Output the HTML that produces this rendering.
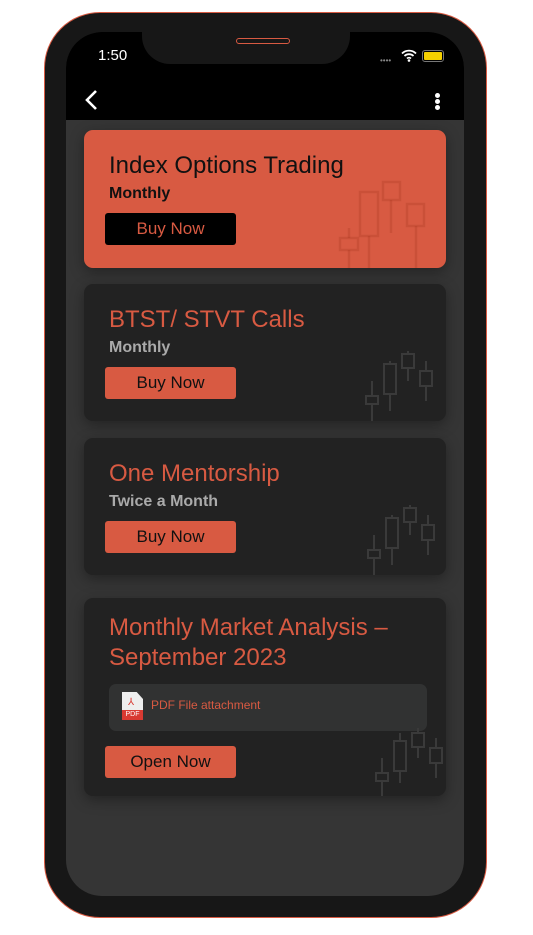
<!DOCTYPE html>
<html><head><style>
*{margin:0;padding:0;box-sizing:border-box}
body{width:533px;height:935px;background:#fff;position:relative;overflow:hidden;font-family:"Liberation Sans",sans-serif}
.phone{position:absolute;left:44px;top:12px;width:443px;height:906px;border-radius:56px;background:#171717;border:1.5px solid #d85a42}
.screen{position:absolute;left:66px;top:32px;width:398px;height:864px;border-radius:36px;background:#353535;overflow:hidden}
.top{position:absolute;left:0;top:0;width:398px;height:88px;background:#000}
.pill{position:absolute;left:236px;top:38px;width:54px;height:6px;border:1.5px solid #d85a42;border-radius:4px}
.card{position:absolute;left:84px;width:362px;background:#222;border-radius:9px;box-shadow:0 4px 14px rgba(0,0,0,.35);overflow:hidden}
.t{position:absolute;left:25px;font-size:24px;color:#d85a42;white-space:nowrap}
.s{position:absolute;left:25px;font-size:16px;font-weight:bold;color:#aaa}
.b{position:absolute;left:21px;width:131px;height:32px;border-radius:3px;background:#d85a42;color:#111;font-size:17px;text-align:center;line-height:32px}
svg.c{position:absolute}
</style></head><body>
<div class="phone"></div>
<div class="screen">
<div class="top"></div>
</div>
<div style="left:142px;top:32px;width:208px;height:32px;position:absolute;background:#171717;border-radius:0 0 28px 28px"></div>
<div class="pill"></div>
<div style="position:absolute;left:98px;top:47px;color:#fff;font-size:15px">1:50</div>
<div style="position:absolute;left:380px;top:56px;color:#888;font-size:8px">••••</div>
<svg style="position:absolute;left:401px;top:49px" width="16" height="13" viewBox="0 0 16 13"><path d="M1 4.5a10 10 0 0 1 14 0M3.5 7a6.5 6.5 0 0 1 9 0M6 9.5a3 3 0 0 1 4 0" stroke="#fff" stroke-width="1.8" fill="none"/><circle cx="8" cy="11.5" r="1.3" fill="#fff"/></svg>
<div style="position:absolute;left:422px;top:50px;width:22px;height:12px;border:1.5px solid #777;border-radius:3px;padding:1px"><div style="width:100%;height:100%;background:#f5d000;border-radius:1px"></div></div>
<svg style="position:absolute;left:84px;top:89px" width="16" height="22"><path d="M12 2L3 11l9 9" stroke="#fff" stroke-width="2.6" fill="none"/></svg>
<div style="position:absolute;left:435px;top:93px;width:5px;height:5px;border-radius:50%;background:#fff;box-shadow:0 6px 0 #fff,0 12px 0 #fff"></div>

<div class="card" style="top:130px;height:138px;background:#d85a42">
<div class="t" style="top:22px;color:#111">Index Options Trading</div>
<div class="s" style="top:55px;color:#111">Monthly</div>
<div class="b" style="top:83px;background:#000;color:#d85a42">Buy Now</div>
<svg class="c" style="left:254px;top:38px" width="100" height="100" viewBox="0 0 100 100" fill="none" stroke="rgba(150,40,20,.2)" stroke-width="2.5"><path d="M11 60v50M31 32v70M53 25v40M78 50v50"/><rect x="2" y="70" width="18" height="12" fill="#d85a42"/><rect x="22" y="24" width="18" height="44" fill="#d85a42"/><rect x="45" y="14" width="17" height="18" fill="#d85a42"/><rect x="69" y="36" width="17" height="22" fill="#d85a42"/></svg>
</div>

<div class="card" style="top:284px;height:137px">
<div class="t" style="top:22px">BTST/ STVT Calls</div>
<div class="s" style="top:55px">Monthly</div>
<div class="b" style="top:83px">Buy Now</div>
<svg class="c" style="left:280px;top:62px" width="80" height="75" viewBox="0 0 80 75" fill="none" stroke="#3a3a3a" stroke-width="2"><path d="M8 35v40M26 15v50M44 5v30M62 15v40"/><rect x="2" y="50" width="12" height="8" fill="#222"/><rect x="20" y="18" width="12" height="30" fill="#222"/><rect x="38" y="8" width="12" height="14" fill="#222"/><rect x="56" y="25" width="12" height="15" fill="#222"/></svg>
</div>

<div class="card" style="top:438px;height:137px">
<div class="t" style="top:22px">One Mentorship</div>
<div class="s" style="top:55px">Twice a Month</div>
<div class="b" style="top:83px">Buy Now</div>
<svg class="c" style="left:282px;top:62px" width="80" height="75" viewBox="0 0 80 75" fill="none" stroke="#3a3a3a" stroke-width="2"><path d="M8 35v40M26 15v50M44 5v30M62 15v40"/><rect x="2" y="50" width="12" height="8" fill="#222"/><rect x="20" y="18" width="12" height="30" fill="#222"/><rect x="38" y="8" width="12" height="14" fill="#222"/><rect x="56" y="25" width="12" height="15" fill="#222"/></svg>
</div>

<div class="card" style="top:598px;height:198px">
<div class="t" style="top:15px;line-height:30px">Monthly Market Analysis –<br>September 2023</div>
<div style="position:absolute;left:25px;top:86px;width:318px;height:47px;background:#313232;border-radius:7px"></div>
<div style="position:absolute;left:38px;top:94px;width:21px;height:28px;background:#eee;clip-path:polygon(0 0,70% 0,100% 25%,100% 100%,0 100%)"><div style="position:absolute;left:0;bottom:0;width:21px;height:10px;background:#d83a32;color:#fff;font-size:7px;text-align:center;line-height:10px">PDF</div><div style="position:absolute;left:6px;top:5px;color:#d83a32;font-size:10px">⅄</div></div>
<div style="position:absolute;left:67px;top:100px;font-size:12px;color:#d85a42">PDF File attachment</div>
<div class="b" style="top:148px">Open Now</div>
<svg class="c" style="left:290px;top:125px" width="80" height="75" viewBox="0 0 80 75" fill="none" stroke="#3a3a3a" stroke-width="2"><path d="M8 35v40M26 10v50M44 5v30M62 15v40"/><rect x="2" y="50" width="12" height="8" fill="#222"/><rect x="20" y="18" width="12" height="30" fill="#222"/><rect x="38" y="10" width="12" height="14" fill="#222"/><rect x="56" y="25" width="12" height="15" fill="#222"/></svg>
</div>
</body></html>
